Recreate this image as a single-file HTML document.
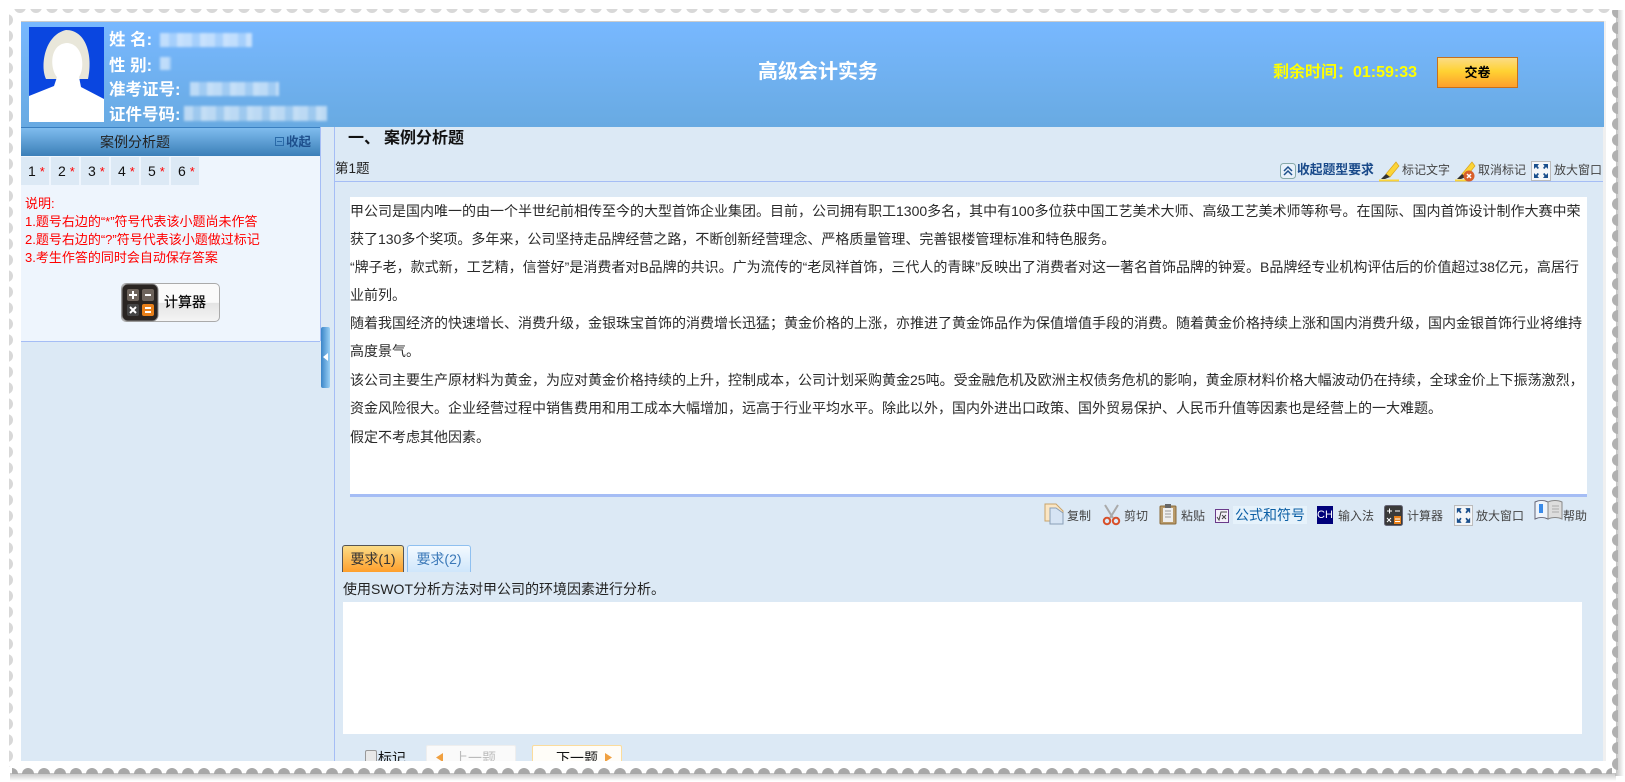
<!DOCTYPE html>
<html lang="zh"><head><meta charset="utf-8"><style>
html,body{margin:0;padding:0;width:1625px;height:782px;overflow:hidden;background:#fff}
body{position:relative;font-family:"Liberation Sans","Noto Sans CJK SC",sans-serif;color:#222}
div,svg,span.a{position:absolute}
.t{white-space:nowrap;line-height:20px;height:20px}
.l{left:350px;font-size:14px;color:#2a2a2a;white-space:nowrap;line-height:20px;height:20px}
.n{top:157px;width:28px;height:28px;background:#dce9f5;line-height:28px;font-size:14px;text-indent:7px;color:#111}
.n i{color:#f00;font-style:normal;margin-left:4px;font-size:13px}
.r{left:25px;font-size:13px;color:#f00;white-space:nowrap;line-height:18px;height:18px}
.g{font-size:12px;color:#444;white-space:nowrap;line-height:16px;height:16px}
.h{left:109px;color:#fff;font-weight:bold;font-size:16.5px;white-space:nowrap;line-height:24px;height:24px}
.b{background:repeating-linear-gradient(90deg,rgba(255,255,255,.55) 0 9px,rgba(255,255,255,.35) 9px 17px,rgba(255,255,255,.6) 17px 23px);filter:blur(1.2px)}
</style></head><body>

<svg style="left:0;top:0" width="1625" height="782" viewBox="0 0 1625 782">
<defs>
<linearGradient id="sb" x1="0" y1="0" x2="0" y2="1"><stop offset="0" stop-color="#bbb"/><stop offset="1" stop-color="#fff"/></linearGradient>
<linearGradient id="sr" x1="0" y1="0" x2="1" y2="0"><stop offset="0" stop-color="#bbb"/><stop offset="1" stop-color="#fff"/></linearGradient>
<pattern id="pt" x="12" y="0" width="16" height="16" patternUnits="userSpaceOnUse"><circle cx="8" cy="7" r="6" fill="#d8d8d8"/></pattern>
<pattern id="pl" x="0" y="12" width="16" height="16" patternUnits="userSpaceOnUse"><circle cx="7" cy="8" r="6" fill="#d8d8d8"/></pattern>
<pattern id="pb" x="4" y="766" width="16" height="16" patternUnits="userSpaceOnUse"><circle cx="8" cy="8" r="6" fill="#a8a8a8"/></pattern>
<pattern id="pr" x="1610" y="4" width="16" height="16" patternUnits="userSpaceOnUse"><circle cx="8" cy="8" r="6" fill="#b0b0b0"/></pattern>
</defs>
<rect x="10" y="772" width="1606" height="9" fill="url(#sb)"/>
<rect x="1615" y="10" width="9" height="766" fill="url(#sr)"/>
<rect x="9" y="9" width="1607" height="764" fill="#fff"/>
<rect x="12" y="9" width="1600" height="5" fill="url(#pt)"/>
<rect x="9" y="12" width="5" height="755" fill="url(#pl)"/>
<rect x="12" y="768" width="1600" height="6" fill="url(#pb)"/>
<rect x="1612" y="10" width="6" height="762" fill="url(#pr)"/>
</svg>

<div style="left:21px;top:21px;width:1583px;height:740px;background:#dce9f5;overflow:hidden"></div>
<div style="left:1603px;top:21px;width:3px;height:740px;background:#f0f0f0"></div>
<div style="left:21px;top:21px;width:1583px;height:106px;background:linear-gradient(#78b8ff,#68aae2);border-top:1px solid #ccc;box-sizing:border-box"></div>

<svg style="left:29px;top:27px" width="75" height="95" viewBox="0 0 75 95">
<rect width="75" height="95" fill="#0a46e0"/>
<path d="M17 52C11 40 15 8 37 3C57 3 64 28 59 52Z" fill="#e9e7da"/>
<path d="M0 69L25 59L28 50C21 42 20 17 38 16C55 17 56 42 50 50L52 60L75 72V95H0Z" fill="#fff"/>
</svg>

<div class="h" style="top:28px">姓 名:</div>
<div class="b" style="left:160px;top:33px;width:92px;height:14px"></div>
<div class="h" style="top:54px">性 别:</div>
<div class="b" style="left:160px;top:57px;width:11px;height:13px"></div>
<div class="h" style="top:78px">准考证号:</div>
<div class="b" style="left:190px;top:82px;width:89px;height:14px"></div>
<div class="h" style="top:103px">证件号码:</div>
<div class="b" style="left:184px;top:106px;width:143px;height:15px"></div>

<div class="t" style="left:758px;top:60px;width:122px;font-size:20px;font-weight:bold;color:#fff;line-height:24px;height:24px">高级会计实务</div>
<div class="t" style="left:1273px;top:63px;font-size:16px;font-weight:bold;color:#ff0">剩余时间&#65306;</div>
<div class="t" style="left:1353px;top:63px;font-size:16px;font-weight:bold;color:#ff0">01:59:33</div>
<div style="left:1437px;top:57px;width:79px;height:29px;border:1px solid #c7701c;background:linear-gradient(#fbdc86,#ffd233 45%,#fe9f2c);text-align:center;font-size:13px;font-weight:bold;line-height:29px;color:#000">交卷</div>

<!-- left panel -->
<div style="left:21px;top:127px;width:299px;height:214px;background:#eef5fd;border-bottom:1px solid #a5bdf5;box-sizing:content-box"></div>
<div style="left:320px;top:127px;width:1px;height:214px;background:#a5bdf5"></div>
<div style="left:334px;top:127px;width:1px;height:634px;background:#a5bdf5"></div>
<div style="left:21px;top:127px;width:299px;height:29px;background:linear-gradient(#7fbcee,#3b7fb8);border-top:1px solid #3a7fc0;box-sizing:border-box"></div>
<div class="t" style="left:100px;top:132px;font-size:14px;color:#222">案例分析题</div>
<div style="left:275px;top:137px;width:7px;height:7px;border:1px solid #2a6aa8"></div>
<div style="left:277px;top:141px;width:5px;height:1px;background:#2a6aa8"></div>
<div class="t" style="left:286px;top:132px;font-size:12.5px;font-weight:bold;color:#1d4f8c">收起</div>

<div class="n" style="left:21px">1<i>*</i></div>
<div class="n" style="left:51px">2<i>*</i></div>
<div class="n" style="left:81px">3<i>*</i></div>
<div class="n" style="left:111px">4<i>*</i></div>
<div class="n" style="left:141px">5<i>*</i></div>
<div class="n" style="left:171px">6<i>*</i></div>

<div class="r" style="top:195px">说明:</div>
<div class="r" style="top:213px">1.题号右边的“*”符号代表该小题尚未作答</div>
<div class="r" style="top:231px">2.题号右边的“?”符号代表该小题做过标记</div>
<div class="r" style="top:249px">3.考生作答的同时会自动保存答案</div>

<div style="left:121px;top:283px;width:97px;height:37px;border:1px solid #aaa;border-radius:5px;background:linear-gradient(#fafafa 50%,#e4e4e4 52%,#f4f4f4)"></div>
<svg style="left:121px;top:283px" width="38" height="39" viewBox="0 0 38 39">
<rect x="1" y="1" width="36" height="37" rx="6" fill="#2a2522" stroke="#888"/>
<rect x="6" y="6" width="12" height="12" rx="2" fill="#6e645c"/><rect x="21" y="6" width="12" height="12" rx="2" fill="#6e645c"/>
<rect x="6" y="21" width="12" height="12" rx="2" fill="#444"/><rect x="21" y="21" width="12" height="12" rx="2" fill="#e8801a"/>
<path d="M8 12H16M12 8V16M24 12H30M9 24L15 30M15 24L9 30M24 25H30M24 29H30" stroke="#fff" stroke-width="2" fill="none"/>
</svg>
<div class="t" style="left:164px;top:292px;font-size:14px;color:#000;-webkit-text-stroke:.15px #000">计算器</div>

<div style="left:321px;top:327px;width:9px;height:61px;border-radius:2px;background:linear-gradient(90deg,#3a85c8,#9ad0f5)"></div>
<svg style="left:323px;top:353px" width="6" height="8" viewBox="0 0 6 8"><path d="M5 0V8L0 4Z" fill="#fff"/></svg>

<!-- main -->
<div class="t" style="left:348px;top:129px;font-size:16px;font-weight:bold;color:#111">一、</div>
<div class="t" style="left:384px;top:129px;font-size:16px;font-weight:bold;color:#111">案例分析题</div>
<div class="t" style="left:335px;top:159px;font-size:13.5px;color:#222">第1题</div>
<div style="left:335px;top:181px;width:1268px;height:1px;background:#a5bdf5"></div>

<svg style="left:1280px;top:163px" width="16" height="16" viewBox="0 0 16 16"><rect x=".5" y=".5" width="15" height="15" rx="3" fill="#e8f1fa" stroke="#8aa"/><path d="M4 8L8 4L12 8M4 12L8 8L12 12" fill="none" stroke="#1d4f8c" stroke-width="1.5"/></svg>
<div class="t" style="left:1297px;top:160px;font-size:12.8px;font-weight:bold;color:#1a4a8a">收起题型要求</div>
<svg style="left:1379px;top:161px" width="21" height="21" viewBox="0 0 21 21"><path d="M7 13L17 1L20 5L11 16Z" fill="#fbd437" stroke="#d9a520" stroke-width=".7"/><path d="M7 13L11 16L6 18L2 18Z" fill="#333"/><rect y="18.500" width="20" height="2" fill="#fbd437"/></svg>
<div class="g" style="left:1402px;top:162px">标记文字</div>
<svg style="left:1455px;top:161px" width="21" height="21" viewBox="0 0 21 21"><path d="M7 13L17 1L20 5L11 16Z" fill="#fbd437" stroke="#d9a520" stroke-width=".7"/><path d="M7 13L11 16L6 18L2 18Z" fill="#333"/><rect y="18.500" width="14" height="2" fill="#fbd437"/><circle cx="14" cy="15" r="5.500" fill="#d8602a"/><path d="M12 13L16 17M16 13L12 17" stroke="#fff" stroke-width="1.500"/></svg>
<div class="g" style="left:1478px;top:162px">取消标记</div>
<svg style="left:1531px;top:161px" width="20" height="20" viewBox="0 0 20 20"><rect x=".5" y=".5" width="19" height="19" fill="#f4f6f8" stroke="#bbb"/><path d="M3 3H8L6.500 5L8 7L6.500 8L5 6L3 8ZM17 3H12L13.500 5L12 7L13.500 8L15 6L17 8ZM3 17H8L6.500 15L8 13L6.500 12L5 14L3 12ZM17 17H12L13.500 15L12 13L13.500 12L15 14L17 12Z" fill="#1a4f8c"/></svg>
<div class="g" style="left:1554px;top:162px">放大窗口</div>

<div style="left:350px;top:197px;width:1237px;height:297px;background:#fff"></div>
<div style="left:350px;top:494px;width:1237px;height:3px;background:#a5bdf5"></div>

<div class="l" style="top:201px">甲公司是国内唯一的由一个半世纪前相传至今的大型首饰企业集团。目前&#65292;公司拥有职工1300多名&#65292;其中有100多位获中国工艺美术大师、高级工艺美术师等称号。在国际、国内首饰设计制作大赛中荣</div>
<div class="l" style="top:229px">获了130多个奖项。多年来&#65292;公司坚持走品牌经营之路&#65292;不断创新经营理念、严格质量管理、完善银楼管理标准和特色服务。</div>
<div class="l" style="top:257px">“牌子老&#65292;款式新&#65292;工艺精&#65292;信誉好”是消费者对B品牌的共识。广为流传的“老凤祥首饰&#65292;三代人的青睐”反映出了消费者对这一著名首饰品牌的钟爱。B品牌经专业机构评估后的价值超过38亿元&#65292;高居行</div>
<div class="l" style="top:285px">业前列。</div>
<div class="l" style="top:313px">随着我国经济的快速增长、消费升级&#65292;金银珠宝首饰的消费增长迅猛&#65307;黄金价格的上涨&#65292;亦推进了黄金饰品作为保值增值手段的消费。随着黄金价格持续上涨和国内消费升级&#65292;国内金银首饰行业将维持</div>
<div class="l" style="top:341px">高度景气。</div>
<div class="l" style="top:370px">该公司主要生产原材料为黄金&#65292;为应对黄金价格持续的上升&#65292;控制成本&#65292;公司计划采购黄金25吨。受金融危机及欧洲主权债务危机的影响&#65292;黄金原材料价格大幅波动仍在持续&#65292;全球金价上下振荡激烈&#65292;</div>
<div class="l" style="top:398px">资金风险很大。企业经营过程中销售费用和用工成本大幅增加&#65292;远高于行业平均水平。除此以外&#65292;国内外进出口政策、国外贸易保护、人民币升值等因素也是经营上的一大难题。</div>
<div class="l" style="top:427px">假定不考虑其他因素。</div>

<!-- toolbar -->
<svg style="left:1044px;top:503px" width="20" height="22" viewBox="0 0 20 22"><path d="M1 1H12L19 8V21H6V18H1Z" fill="#fbe6c4" stroke="#c9a46a"/><path d="M6 5H12L19 10V21H6Z" fill="#d6e4f4" stroke="#8aa0b8"/></svg>
<div class="g" style="left:1067px;top:508px">复制</div>
<svg style="left:1102px;top:504px" width="19" height="22" viewBox="0 0 19 22"><path d="M3 1L11 14M16 1L8 14" stroke="#aaa" stroke-width="2"/><circle cx="5" cy="17" r="3.200" fill="none" stroke="#d8502a" stroke-width="2"/><circle cx="14" cy="17" r="3.200" fill="none" stroke="#d8502a" stroke-width="2"/></svg>
<div class="g" style="left:1124px;top:508px">剪切</div>
<svg style="left:1159px;top:503px" width="18" height="22" viewBox="0 0 18 22"><rect x="1" y="3" width="16" height="18" rx="1" fill="#b89a6a" stroke="#8a6a3a"/><rect x="4" y="5" width="10" height="14" fill="#eee"/><rect x="6" y="1" width="6" height="4" fill="#666"/><path d="M6 8H12M6 11H12M6 14H12" stroke="#999"/></svg>
<div class="g" style="left:1181px;top:508px">粘贴</div>
<svg style="left:1215px;top:509px" width="14" height="14" viewBox="0 0 14 14"><rect x=".5" y=".5" width="13" height="13" fill="#f4f0fa" stroke="#6a3a8a"/><path d="M2 8L4 11L6 3H12" fill="none" stroke="#444"/><path d="M7 6L11 10M11 6L7 10" stroke="#444"/></svg>
<div style="left:1233px;top:506px;width:74px;height:18px;background:#e6f2fb"></div>
<div class="t" style="left:1235px;top:505px;font-size:14px;color:#0b5fa5">公式和符号</div>
<div style="left:1317px;top:506px;width:16px;height:18px;background:#00007a;color:#fff;font-size:11px;line-height:18px;text-align:center;overflow:hidden">CH</div>
<div class="g" style="left:1338px;top:508px">输入法</div>
<svg style="left:1384px;top:505px" width="19" height="21" viewBox="0 0 19 21"><rect x=".5" y=".5" width="18" height="20" rx="2" fill="#3a3a3a" stroke="#667"/><rect x="10" y="11" width="7" height="8" fill="#e8801a"/><path d="M3 6H8M5.500 3.500V8.500M11 6H16M3 13L7 17M7 13L3 17M11 14H16M11 16.500H16" stroke="#fff"/></svg>
<div class="g" style="left:1407px;top:508px">计算器</div>
<svg style="left:1454px;top:505px" width="19" height="21" viewBox="0 0 20 20" preserveAspectRatio="none"><rect x=".5" y=".5" width="19" height="19" fill="#f4f6f8" stroke="#bbb"/><path d="M3 3H8L6.500 5L8 7L6.500 8L5 6L3 8ZM17 3H12L13.500 5L12 7L13.500 8L15 6L17 8ZM3 17H8L6.500 15L8 13L6.500 12L5 14L3 12ZM17 17H12L13.500 15L12 13L13.500 12L15 14L17 12Z" fill="#1a4f8c"/></svg>
<div class="g" style="left:1476px;top:508px">放大窗口</div>
<svg style="left:1534px;top:500px" width="29" height="20" viewBox="0 0 29 20"><path d="M1 2C5 0 10 0 14 2V19C10 17 5 17 1 19Z" fill="#eef4fb" stroke="#667"/><path d="M14 2C18 0 24 0 28 2V19C24 17 18 17 14 19Z" fill="#ddd" stroke="#888"/><rect x="5" y="4" width="4" height="9" fill="#3a8ae8"/><path d="M18 6H25M18 9H25M18 12H25" stroke="#aaa"/></svg>
<div class="g" style="left:1563px;top:508px">帮助</div>

<!-- tabs -->
<div style="left:342px;top:545px;width:60px;height:26px;border:1px solid #555;border-bottom:0;border-radius:3px 3px 0 0;background:linear-gradient(#fbdc86,#fe9f2c);text-align:center;font-size:14px;line-height:26px;color:#333">要求(1)</div>
<div style="left:407px;top:545px;width:62px;height:26px;border:1px solid #8fc0f0;border-bottom:0;border-radius:3px 3px 0 0;background:linear-gradient(#f4faff,#cfe6fb);text-align:center;font-size:14px;line-height:26px;color:#3a78b8">要求(2)</div>
<div class="t" style="left:343px;top:579px;font-size:14px;color:#222">使用SWOT分析方法对甲公司的环境因素进行分析。</div>
<div style="left:343px;top:602px;width:1239px;height:132px;background:#fff"></div>

<!-- bottom buttons clipped -->
<div style="left:21px;top:740px;width:1582px;height:21px;overflow:hidden">
  <div style="left:344px;top:10px;width:10px;height:14px;border:1px solid #999;border-radius:2px;background:#e8e8e8"></div>
  <div class="t" style="left:357px;top:8px;font-size:14px;color:#111">标记</div>
  <div style="left:405px;top:5px;width:88px;height:24px;border:1px solid #eee;border-radius:2px;background:#fafafa"></div>
  <svg style="left:415px;top:13px" width="7" height="9" viewBox="0 0 7 9"><path d="M7 0V9L0 4.500Z" fill="#f0a040"/></svg>
  <div class="t" style="left:433px;top:8px;font-size:14px;color:#bbb">上一题</div>
  <div style="left:511px;top:5px;width:88px;height:24px;border:1px solid #fbdc9c;border-radius:2px;background:#fffdf8"></div>
  <div class="t" style="left:535px;top:8px;font-size:14px;color:#111">下一题</div>
  <svg style="left:584px;top:13px" width="7" height="9" viewBox="0 0 7 9"><path d="M0 0V9L7 4.500Z" fill="#f0a040"/></svg>
</div>
</body></html>
